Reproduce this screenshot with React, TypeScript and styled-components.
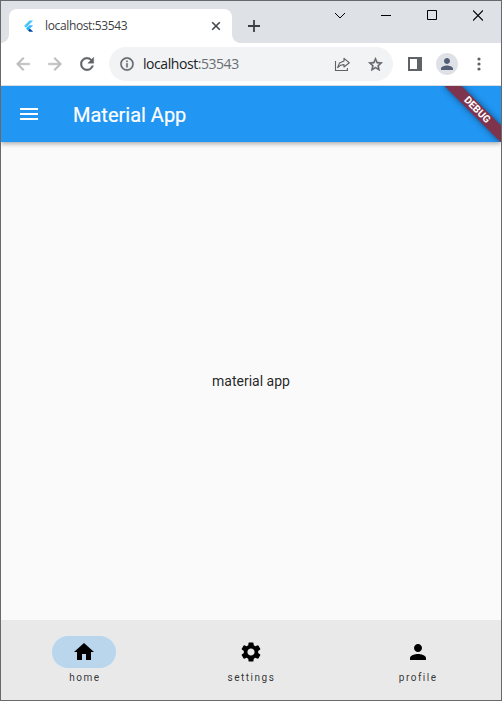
import React from 'react';
import styled, { createGlobalStyle } from 'styled-components';
import { MdArrowBack, MdArrowForward, MdRefresh, MdInfoOutline, MdStarBorder, MdMenu, MdHome, MdSettings, MdPerson } from 'react-icons/md';

const GlobalStyle = createGlobalStyle`
  * { box-sizing: border-box; }
  body { margin: 0; overflow: hidden; }
`;

const Window = styled.div`
  width: 502px;
  height: 701px;
  border: 1px solid #69696b;
  display: flex;
  flex-direction: column;
  background: #fafafa;
  overflow: hidden;
`;

const TabStrip = styled.header`
  height: 42px;
  flex: none;
  display: flex;
  justify-content: space-between;
  background: #dee1e6;
  padding-left: 8px;
`;

const TabGroup = styled.div`
  display: flex;
  padding-top: 8px;
`;

const Tab = styled.div`
  position: relative;
  width: 223px;
  height: 34px;
  display: flex;
  align-items: center;
  padding: 0 10px 0 12px;
  background: #fff;
  border-radius: 8px 8px 0 0;
  &::before, &::after {
    content: '';
    position: absolute;
    bottom: 0;
    width: 8px;
    height: 8px;
  }
  &::before {
    left: -8px;
    background: radial-gradient(circle at 0 0, transparent 7.5px, #fff 8px);
  }
  &::after {
    right: -8px;
    background: radial-gradient(circle at 100% 0, transparent 7.5px, #fff 8px);
  }
`;

const TabTitle = styled.span`
  flex: 1;
  margin-left: 8px;
  font: 12px/16px 'Open Sans', sans-serif;
  letter-spacing: -0.36px;
  color: #3c4043;
`;

const NewTab = styled.div`
  width: 28px;
  height: 34px;
  margin-left: 8px;
  display: flex;
  align-items: center;
  justify-content: center;
`;

const Caption = styled.div`
  display: flex;
  height: 29px;
`;

const CaptionButton = styled.div`
  width: 46px;
  height: 29px;
  display: flex;
  align-items: center;
  justify-content: center;
`;

const Toolbar = styled.div`
  height: 43px;
  flex: none;
  display: flex;
  align-items: center;
  padding: 0 6px;
  background: #fff;
  border-bottom: 1px solid #dadce0;
`;

const ToolButton = styled.div<{ $dim?: boolean; $stroke?: number }>`
  width: 32px;
  height: 32px;
  flex: none;
  display: flex;
  align-items: center;
  justify-content: center;
  color: ${(p) => (p.$dim ? '#babcbe' : '#5f6368')};
  & > svg { stroke-width: ${(p) => p.$stroke ?? 0}; }
  & path[fill='none'] { stroke: none; }
`;

const Omnibox = styled.div`
  width: 284px;
  height: 34px;
  margin: 0 6px 0 6px;
  padding: 0 2px;
  display: flex;
  align-items: center;
  border-radius: 17px;
  background: #f1f3f4;
`;

const Url = styled.span`
  flex: 1;
  font: 14px/20px 'Open Sans', sans-serif;
  letter-spacing: -0.44px;
  color: #202124;
  white-space: nowrap;
`;

const Port = styled.span`
  color: #6a6e73;
`;

const Avatar = styled.div`
  width: 22px;
  height: 22px;
  border-radius: 50%;
  background: #dee1e6;
  color: #535f74;
  display: flex;
  align-items: center;
  justify-content: center;
`;

const AppBar = styled.div`
  position: relative;
  height: 56px;
  flex: none;
  display: flex;
  align-items: center;
  padding-left: 16px;
  gap: 32px;
  background: #2196f3;
  color: #fff;
  box-shadow: 0 2px 4px -1px rgba(0, 0, 0, 0.2), 0 3px 4px rgba(0, 0, 0, 0.1), 0 1px 6px rgba(0, 0, 0, 0.08);
  clip-path: inset(0 0 -12px 0);
`;

const AppTitle = styled.h1`
  margin: 0;
  padding-top: 1px;
  font: 400 20px/24px Roboto, sans-serif;
  -webkit-text-stroke: 0.2px #fff;
`;

const DebugCorner = styled.div`
  position: absolute;
  top: 0;
  right: 0;
  width: 72px;
  height: 56px;
  overflow: hidden;
`;

const DebugRibbon = styled.div`
  position: absolute;
  left: 8px;
  top: 18px;
  width: 80px;
  height: 12px;
  transform: rotate(45deg);
  background: #7f344e;
  box-shadow: 0 0 6px rgba(0, 0, 0, 0.5);
  text-align: center;
  font: 700 10.2px/12px Roboto, sans-serif;
  color: #fff;
`;

const Body = styled.main`
  flex: 1;
  display: flex;
  align-items: center;
  justify-content: center;
  font: 14px/16px Roboto, sans-serif;
  color: rgba(0, 0, 0, 0.87);
`;

const NavBar = styled.nav`
  height: 80px;
  flex: none;
  display: grid;
  grid-template-columns: repeat(3, 1fr);
  background: #e9e9e9;
`;

const NavItem = styled.div`
  display: flex;
  flex-direction: column;
  align-items: center;
  padding-top: 16px;
  gap: 3px;
`;

const Indicator = styled.div<{ $active?: boolean }>`
  width: 64px;
  height: 32px;
  border-radius: 16px;
  display: flex;
  align-items: center;
  justify-content: center;
  color: #000;
  background: ${(p) => (p.$active ? '#b9d6ec' : 'transparent')};
`;

const NavLabel = styled.span`
  font: 10px/13px Roboto, sans-serif;
  letter-spacing: 1.5px;
  margin-left: 1px;
  color: rgba(0, 0, 0, 0.8);
`;

const FlutterLogo = () => (
  <svg width="16" height="16" viewBox="0 0 16 16">
    <path d="M8.500 2.500h3.700L5 9.700 3.100 7.900z" fill="#47c5fb" />
    <path d="M8.500 7.200h3.700L8.900 10.500 7 8.600z" fill="#35b5fb" />
    <path d="M5.100 10.500 7 8.600l1.900 1.900L7 12.400z" fill="#13b9fd" />
    <path d="m7 12.400 1.900-1.900 3.300 3.300H8.500z" fill="#07459a" />
  </svg>
);

const ShareIcon = () => (
  <svg width="18" height="18" viewBox="0 0 18 18" fill="none" stroke="#5f6368">
    <g>
      <polyline points="1.500,6 1.500,15.500 13.400,15.500 13.400,13" />
      <polygon points="10,3.400 15.300,7.700 10,12 10,9.600 6.500,10.300 3.600,12.600 5.500,8 10,5.900" strokeLinejoin="round" />
    </g>
  </svg>
);

const navItems = [
  { label: 'home', Icon: MdHome, active: true },
  { label: 'settings', Icon: MdSettings, active: false },
  { label: 'profile', Icon: MdPerson, active: false },
];

export default function App() {
  return (
    <>
      <GlobalStyle />
      <Window>
        <TabStrip>
          <TabGroup>
            <Tab>
              <FlutterLogo />
              <TabTitle>localhost:53543</TabTitle>
              <svg width="12" height="12" viewBox="0 0 12 12" stroke="#45484c" strokeWidth="1.600">
                <path d="m2.200 2.200 7.600 7.600M9.800 2.200 2.200 9.800" />
              </svg>
            </Tab>
            <NewTab>
              <svg width="14" height="14" viewBox="0 0 14 14" stroke="#3c4043" strokeWidth="1.800">
                <path d="M7 1v12M1 7h12" />
              </svg>
            </NewTab>
          </TabGroup>
          <Caption>
            <CaptionButton>
              <svg width="12" height="12" viewBox="0 0 12 12" fill="none" stroke="#000" strokeWidth="1">
                <path d="m1 3 5 5 5-5" />
              </svg>
            </CaptionButton>
            <CaptionButton>
              <svg width="10" height="11" viewBox="0 0 10 11"><path d="M0 5h10v1H0z" /></svg>
            </CaptionButton>
            <CaptionButton>
              <svg width="10" height="11" viewBox="0 0 10 11" fill="none" stroke="#000"><path d="M.5.5h9v9h-9z" /></svg>
            </CaptionButton>
            <CaptionButton>
              <svg width="10" height="11" viewBox="0 0 10 11" stroke="#000" strokeWidth="1.200"><path d="m0 .5 10 10M10 .5l-10 10" /></svg>
            </CaptionButton>
          </Caption>
        </TabStrip>
        <Toolbar>
          <ToolButton $dim $stroke={0.5}><MdArrowBack size={20} /></ToolButton>
          <ToolButton $dim $stroke={0.5}><MdArrowForward size={20} /></ToolButton>
          <ToolButton $stroke={0.5}><MdRefresh size={20} /></ToolButton>
          <Omnibox>
            <ToolButton $stroke={0.4}><MdInfoOutline size={16} /></ToolButton>
            <Url>localhost<Port>:53543</Port></Url>
            <ToolButton $stroke={1.1}><ShareIcon /></ToolButton>
            <ToolButton $stroke={0.6}><MdStarBorder size={17} /></ToolButton>
          </Omnibox>
          <ToolButton>
            <svg width="14" height="14" viewBox="0 0 14 14">
              <path fillRule="evenodd" fill="#5f6368" d="M0 0h14v14H0zM2 2v10h7V2z" />
            </svg>
          </ToolButton>
          <ToolButton><Avatar><MdPerson size={18} /></Avatar></ToolButton>
          <ToolButton>
            <svg width="4" height="14" viewBox="0 0 4 14" fill="#5f6368">
              <circle cx="2" cy="2" r="1.600" /><circle cx="2" cy="7" r="1.600" /><circle cx="2" cy="12" r="1.600" />
            </svg>
          </ToolButton>
        </Toolbar>
        <AppBar>
          <MdMenu size={24} />
          <AppTitle>Material App</AppTitle>
          <DebugCorner>
            <DebugRibbon>DEBUG</DebugRibbon>
          </DebugCorner>
        </AppBar>
        <Body>material app</Body>
        <NavBar>
          {navItems.map(({ label, Icon, active }) => (
            <NavItem key={label}>
              <Indicator $active={active}><Icon size={24} /></Indicator>
              <NavLabel>{label}</NavLabel>
            </NavItem>
          ))}
        </NavBar>
      </Window>
    </>
  );
}
